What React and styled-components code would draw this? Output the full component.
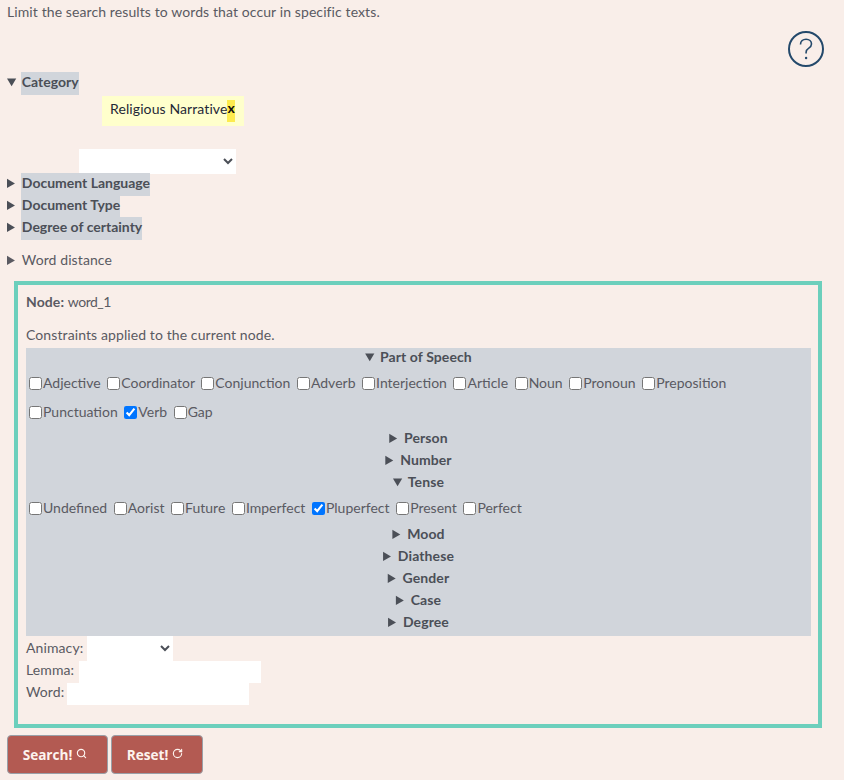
import React from "react";
import styled, { createGlobalStyle } from "styled-components";
import { Search, RotateCw } from "lucide-react";

const GlobalStyle = createGlobalStyle`
  html, body {
    margin: 0;
    background: #f9eee9;
  }
  body {
    font-family: "Lato", "Noto Sans", sans-serif;
    font-size: 14px;
    letter-spacing: 0.1px;
    color: #5a5a62;
  }
`;

const Page = styled.div`
  height: 780px;
  overflow: hidden;
  padding: 0 22px 0 7px;
  box-sizing: border-box;
`;

const Intro = styled.p`
  margin: 0;
  height: 24px;
  line-height: 24px;
`;

const HelpRow = styled.div`
  display: flex;
  justify-content: flex-end;
  height: 48px;
  padding-top: 7px;
  box-sizing: border-box;
`;

const HelpIcon = styled.svg`
  width: 36px;
  height: 36px;
  margin-right: -2px;
  color: #24496b;
`;

const Summary = styled.summary`
  height: 22px;
  line-height: 20px;
  cursor: pointer;
  color: #4b4f57;
`;

const SummaryLabel = styled.span`
  display: inline-block;
  margin-left: -1px;
  padding: 0 0 3px 1px;
  background: #d1d5db;
  font-weight: 700;
  letter-spacing: 0;
  line-height: 20px;
`;

const PlainSummary = styled.summary`
  height: 22px;
  margin-top: 10px;
  cursor: pointer;
  line-height: 22px;
  color: #5a5a62;
`;

const Tag = styled.div`
  display: flex;
  align-items: center;
  width: 142px;
  height: 30px;
  margin: 2px 0 23px 95px;
  padding-left: 8px;
  box-sizing: border-box;
  background: #ffffcc;
  color: #1f2937;
`;

const TagText = styled.span`
  padding-bottom: 6px;
`;

const TagRemove = styled.span`
  height: 22px;
  box-sizing: border-box;
  background: #fdeb4e;
  font-weight: 700;
  line-height: 16px;
  color: #111;
`;

const CategorySelect = styled.select`
  display: block;
  width: 157px;
  height: 25px;
  margin: 0 0 -1px 72px;
  border: none;
  border-radius: 0;
  background: #fff;
  color: #4b4f57;
`;

const NodeBox = styled.section`
  margin: 10px 0 0 7px;
  height: 447px;
  padding: 6px 7px 0 8px;
  box-sizing: border-box;
  border: 4px solid #6ccfbc;
`;

const NodeTitle = styled.div`
  height: 34px;
  line-height: 22px;
`;

const NodeName = styled.span`
  letter-spacing: -0.5px;
`;

const Constraints = styled.div`
  height: 23px;
  line-height: 20px;
`;

const Panel = styled.div`
  background: #d1d5db;
  height: 288px;
  text-align: center;
`;

const FeatureSummary = styled.summary`
  height: 22px;
  padding-bottom: 4px;
  box-sizing: border-box;
  cursor: pointer;
  font-weight: 700;
  line-height: 18px;
  color: #4b4f57;
`;

const OptionRows = styled.div`
  text-align: left;
`;

const OptionRow = styled.div`
  height: ${(p) => p.$height}px;
  line-height: ${(p) => p.$line}px;
  letter-spacing: 0;
  white-space: nowrap;
`;

const Check = styled.input.attrs({ type: "checkbox" })`
  margin: 0 1px 0 3px;
  vertical-align: -2px;
`;

const FieldRow = styled.div`
  display: flex;
  align-items: center;
  height: ${(p) => p.$height}px;
`;

const FieldLabel = styled.label`
  width: ${(p) => p.$width}px;
  padding-bottom: ${(p) => p.$lift}px;
`;

const FieldSelect = styled.select`
  width: 86px;
  height: 25px;
  border: none;
  border-radius: 0;
  background: #fff;
  color: #4b4f57;
`;

const FieldInput = styled.input`
  width: 182px;
  height: 22px;
  padding: 0;
  border: none;
  background: #fff;
`;

const Buttons = styled.div`
  display: flex;
  gap: 3px;
  margin-top: 7px;
`;

const Button = styled.button`
  display: flex;
  align-items: flex-start;
  justify-content: center;
  gap: 4px;
  width: ${(p) => p.$width}px;
  height: 39px;
  padding: 10px ${(p) => p.$trim}px 0 0;
  box-sizing: border-box;
  border: 1px solid #9aa0a8;
  border-radius: 4px;
  background: #b35a52;
  color: #fdf3ee;
  font-family: "Open Sans", "Noto Sans", sans-serif;
  font-size: 13.6px;
  font-weight: 700;
  letter-spacing: 0;
  line-height: 18px;

  svg {
    margin-top: 2px;
  }
`;

const partOfSpeech = [
  ["Adjective", "Coordinator", "Conjunction", "Adverb", "Interjection", "Article", "Noun", "Pronoun", "Preposition"],
  ["Punctuation", "Verb", "Gap"],
];
const tenses = ["Undefined", "Aorist", "Future", "Imperfect", "Pluperfect", "Present", "Perfect"];

const Options = ({ names, checked }) =>
  names.map((name) => (
    <label key={name}>
      <Check defaultChecked={name === checked} />
      {name}{" "}
    </label>
  ));

const Feature = ({ title, open, children }) => (
  <details open={open}>
    <FeatureSummary>{title}</FeatureSummary>
    {children}
  </details>
);

export default function App() {
  return (
    <Page>
      <GlobalStyle />
      <Intro>Limit the search results to words that occur in specific texts.</Intro>
      <HelpRow>
        <HelpIcon viewBox="0 0 36 36" fill="none" stroke="currentColor">
          <circle cx="18" cy="18" r="17" strokeWidth="2" />
          <path d="M12.5 13.5c0-3.2 2.4-5.3 5.6-5.3 3.1 0 5.4 2 5.4 4.7 0 2.2-1.2 3.3-3 4.5-1.6 1-2.4 2-2.4 3.9v1.2" strokeWidth="1.6" />
          <circle cx="18.1" cy="27" r="1.2" fill="currentColor" stroke="none" />
        </HelpIcon>
      </HelpRow>

      <details open>
        <Summary><SummaryLabel>Category</SummaryLabel></Summary>
        <Tag><TagText>Religious Narrative</TagText><TagRemove>x</TagRemove></Tag>
        <CategorySelect />
      </details>
      <details>
        <Summary><SummaryLabel>Document Language</SummaryLabel></Summary>
      </details>
      <details>
        <Summary><SummaryLabel>Document Type</SummaryLabel></Summary>
      </details>
      <details>
        <Summary><SummaryLabel>Degree of certainty</SummaryLabel></Summary>
      </details>
      <details>
        <PlainSummary>Word distance</PlainSummary>
      </details>

      <NodeBox>
        <NodeTitle><b>Node:</b> <NodeName>word_1</NodeName></NodeTitle>
        <Constraints>Constraints applied to the current node.</Constraints>
        <Panel>
          <Feature title="Part of Speech" open>
            <OptionRows>
              <OptionRow $height={30} $line={26}><Options names={partOfSpeech[0]} /></OptionRow>
              <OptionRow $height={29} $line={24}><Options names={partOfSpeech[1]} checked="Verb" /></OptionRow>
            </OptionRows>
          </Feature>
          <Feature title="Person" />
          <Feature title="Number" />
          <Feature title="Tense" open>
            <OptionRows>
              <OptionRow $height={30} $line={26}><Options names={tenses} checked="Pluperfect" /></OptionRow>
            </OptionRows>
          </Feature>
          <Feature title="Mood" />
          <Feature title="Diathese" />
          <Feature title="Gender" />
          <Feature title="Case" />
          <Feature title="Degree" />
        </Panel>
        <FieldRow $height={25}>
          <FieldLabel $width={61} $lift={3}>Animacy:</FieldLabel>
          <FieldSelect />
        </FieldRow>
        <FieldRow $height={22}>
          <FieldLabel $width={53} $lift={6}>Lemma:</FieldLabel>
          <FieldInput />
        </FieldRow>
        <FieldRow $height={22}>
          <FieldLabel $width={41} $lift={6}>Word:</FieldLabel>
          <FieldInput />
        </FieldRow>
      </NodeBox>

      <Buttons>
        <Button $width={101} $trim={5}>Search! <Search size={11} strokeWidth={2.5} /></Button>
        <Button $width={92} $trim={4}>Reset! <RotateCw size={11} strokeWidth={2.5} /></Button>
      </Buttons>
    </Page>
  );
}
